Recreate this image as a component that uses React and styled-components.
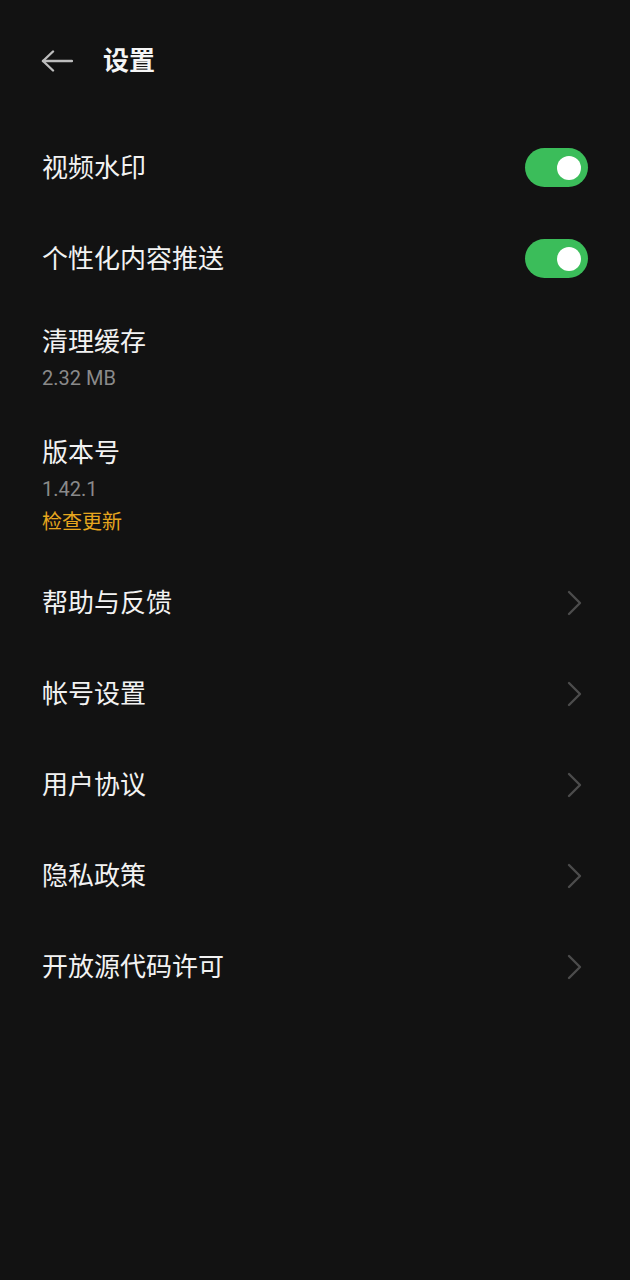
import styled, { createGlobalStyle } from 'styled-components';

const GlobalStyle = createGlobalStyle`
  html, body {
    margin: 0;
    padding: 0;
    background: #121212;
  }
  body {
    font-family: Roboto, "Noto Sans CJK SC", sans-serif;
  }
`

const Page = styled.div`
  min-height: 1280px;
  background: #121212;
  color: #f2f2f2;
`

const Header = styled.header`
  height: 122px;
  display: flex;
  align-items: center;
  padding: 0 42px 0 41px;
  gap: 30px;
`

const BackButton = styled.button`
  border: none;
  background: none;
  padding: 0;
  display: flex;
  color: #bdbdbd;
`

const Title = styled.h1`
  margin: 0;
  font-size: 26px;
  font-weight: 700;
  line-height: 36px;
  color: #f5f5f5;
`

const Row = styled.div`
  display: flex;
  align-items: center;
  justify-content: space-between;
  box-sizing: border-box;
  padding: ${({ tall }) => (tall ? '19.5px 42px 20px' : '0 42px')};
  height: ${({ tall }) => (tall ? 'auto' : '91px')};
`

const Texts = styled.div`
  display: flex;
  flex-direction: column;
`

const Label = styled.div`
  font-size: 26px;
  line-height: 36px;
  color: #f2f2f2;
`

const Sub = styled.div`
  font-size: 20px;
  line-height: 36px;
  color: #8a8a8a;
`

const Link = styled.div`
  font-size: 20px;
  line-height: 30px;
  color: #e6a61e;
`

const Toggle = styled.div`
  width: 63px;
  height: 39px;
  border-radius: 20px;
  background: ${({ on }) => (on ? '#3bbd5a' : '#444')};
  display: flex;
  align-items: center;
  justify-content: ${({ on }) => (on ? 'flex-end' : 'flex-start')};
  padding: 0 7px;
  box-sizing: border-box;
`

const Knob = styled.div`
  width: 24px;
  height: 24px;
  border-radius: 50%;
  background: #ffffff;
`

const Chevron = styled.span`
  display: flex;
  margin-right: 5px;
  color: #4c4c4c;
`

const ChevronIcon = () => (
  <Chevron>
    <svg width="17" height="26" viewBox="0 0 17 26" fill="none">
      <polyline points="3,2 14,13 3,24" stroke="currentColor" strokeWidth="2.4" strokeLinecap="round" strokeLinejoin="round" />
    </svg>
  </Chevron>
)

const links = ['帮助与反馈', '帐号设置', '用户协议', '隐私政策', '开放源代码许可'];

const App = () => {
  return (
    <Page>
      <GlobalStyle />
      <Header>
        <BackButton>
          <svg width="32" height="22" viewBox="0 0 32 22" fill="none">
            <line x1="2" y1="11" x2="31" y2="11" stroke="currentColor" strokeWidth="2.4" strokeLinecap="round" />
            <polyline points="12,1.5 2,11 12,20.5" stroke="currentColor" strokeWidth="2.4" strokeLinecap="round" strokeLinejoin="round" />
          </svg>
        </BackButton>
        <Title>设置</Title>
      </Header>

      <Row>
        <Label>视频水印</Label>
        <Toggle on><Knob /></Toggle>
      </Row>
      <Row>
        <Label>个性化内容推送</Label>
        <Toggle on><Knob /></Toggle>
      </Row>

      <Row tall>
        <Texts>
          <Label>清理缓存</Label>
          <Sub>2.32 MB</Sub>
        </Texts>
      </Row>
      <Row tall>
        <Texts>
          <Label>版本号</Label>
          <Sub>1.42.1</Sub>
          <Link>检查更新</Link>
        </Texts>
      </Row>

      {links.map(item => (
        <Row key={item}>
          <Label>{item}</Label>
          <ChevronIcon />
        </Row>
      ))}
    </Page>
  )
}

export default App;
